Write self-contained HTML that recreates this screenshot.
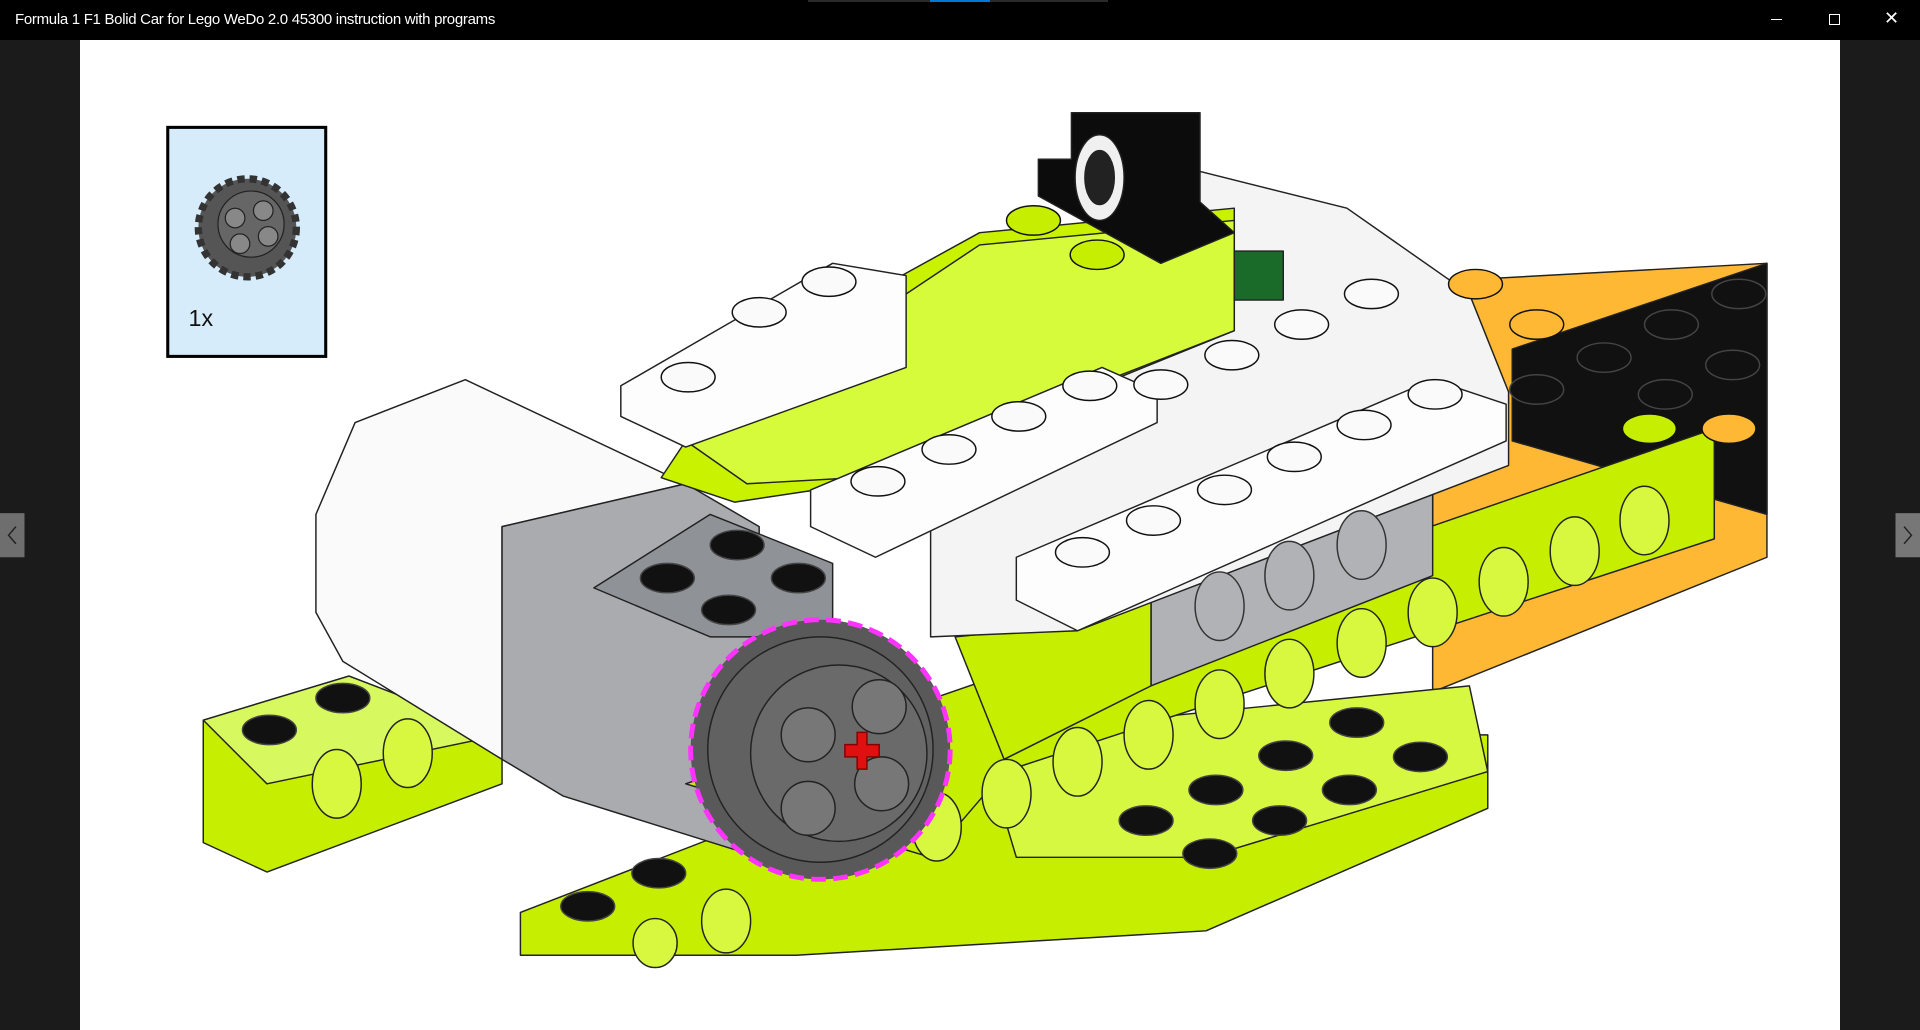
<!DOCTYPE html>
<html><head><meta charset="utf-8"><style>
html,body{margin:0;padding:0;width:1920px;height:1030px;overflow:hidden;background:#1b1b1b;font-family:"Liberation Sans",sans-serif}
#bar{position:absolute;left:0;top:0;width:1920px;height:40px;background:#000;color:#fff}
#title{position:absolute;left:15px;top:11px;font-size:15px;letter-spacing:-0.3px}
#page{position:absolute;left:80px;top:40px;width:1760px;height:990px;background:#fff}
svg{position:absolute;left:0;top:0}
</style></head><body>
<div id="bar"><div id="title">Formula 1 F1 Bolid Car for Lego WeDo 2.0 45300 instruction with programs</div>
<div style="position:absolute;left:808px;top:0;width:300px;height:2px;background:#2a2a2a"></div>
<div style="position:absolute;left:930px;top:0;width:60px;height:2px;background:#0078d7"></div>
<div style="position:absolute;left:1771px;top:19px;width:11px;height:1px;background:#fff"></div>
<div style="position:absolute;left:1829px;top:14px;width:9px;height:9px;border:1px solid #fff"></div>
<div style="position:absolute;left:1884px;top:8px;color:#fff;font-size:18px">✕</div>
</div>
<div id="page"></div>
<svg width="1920" height="1030" viewBox="0 0 1568 841" preserveAspectRatio="none">
<g stroke="#222" stroke-width="1.2" stroke-linejoin="round">
<polygon points="1170,230 1443,215 1443,455 1170,565" fill="#ffb833"/>
<polygon points="1235,285 1443,215 1443,420 1235,360" fill="#111"/>
<polygon points="166,588 285,552 410,600 410,640 218,712 166,688" fill="#c6ee00"/>
<polygon points="166,588 285,552 410,600 218,640" fill="#d8f860"/>
<polygon points="425,745 800,600 1215,600 1215,660 985,760 650,780 425,780" fill="#c6ee00"/>
<polygon points="800,600 1200,560 1215,630 985,700 830,700" fill="#d6f840"/>
<polygon points="258,420 290,345 380,310 560,395 410,430 410,620 280,540 258,500" fill="#fafafa"/>
<polygon points="410,430 560,395 620,430 620,700 460,650 410,620" fill="#a9abae"/>
<polygon points="485,480 580,420 680,460 680,520 580,520" fill="#8f9296"/>
<polygon points="560,640 1400,350 1400,440 820,630 760,700" fill="#c6ee00"/>
<polygon points="940,490 1170,385 1170,470 940,560" fill="#b0b2b5"/>
<polygon points="780,520 880,510 940,490 940,560 820,620" fill="#c6ee00"/>
<polygon points="760,430 980,140 1100,170 1200,240 1232,320 1232,380 880,515 760,520" fill="#f4f4f4"/>
<polygon points="540,390 600,300 800,190 1008,170 1008,270 700,395 600,410" fill="#c8f200"/>
<polygon points="560,360 800,200 1008,180 1008,270 700,390 610,395" fill="#d6fb3a"/>
<polygon points="507,315 680,215 740,225 740,300 560,365 507,340" fill="#fdfdfd"/>
<polygon points="662,400 900,300 945,320 945,345 715,455 662,430" fill="#fdfdfd"/>
<polygon points="830,455 1170,310 1230,330 1230,360 880,515 830,490" fill="#fdfdfd"/>
<polygon points="875,92 980,92 980,165 1008,190 948,215 848,160 848,130 875,130" fill="#0c0c0c"/>
<ellipse cx="898" cy="145" rx="20" ry="35" fill="#f0f0f0"/>
<ellipse cx="898" cy="145" rx="12" ry="22" fill="#222"/>
<rect x="1008" y="205" width="40" height="40" fill="#1a6b2a"/>
</g>
<g stroke="#111" stroke-width="1.2">
<g fill="#fafafa">
<ellipse cx="620" cy="255" rx="22" ry="12"/><ellipse cx="677" cy="230" rx="22" ry="12"/><ellipse cx="562" cy="308" rx="22" ry="12"/>
<ellipse cx="717" cy="393" rx="22" ry="12"/><ellipse cx="775" cy="367" rx="22" ry="12"/><ellipse cx="832" cy="340" rx="22" ry="12"/><ellipse cx="890" cy="315" rx="22" ry="12"/>
<ellipse cx="884" cy="451" rx="22" ry="12"/><ellipse cx="942" cy="425" rx="22" ry="12"/><ellipse cx="1000" cy="400" rx="22" ry="12"/><ellipse cx="1057" cy="373" rx="22" ry="12"/><ellipse cx="1114" cy="347" rx="22" ry="12"/><ellipse cx="1172" cy="322" rx="22" ry="12"/>
<ellipse cx="1006" cy="290" rx="22" ry="12"/><ellipse cx="1063" cy="265" rx="22" ry="12"/><ellipse cx="1120" cy="240" rx="22" ry="12"/><ellipse cx="948" cy="314" rx="22" ry="12"/>
</g>
<g fill="#c6ee00"><ellipse cx="844" cy="180" rx="22" ry="12"/><ellipse cx="896" cy="208" rx="22" ry="12"/><ellipse cx="1347" cy="350" rx="22" ry="12"/></g>
<g fill="#ffb833"><ellipse cx="1205" cy="232" rx="22" ry="12"/><ellipse cx="1255" cy="265" rx="22" ry="12"/><ellipse cx="1412" cy="350" rx="22" ry="12"/></g>
<g fill="#111" stroke="#444">
<ellipse cx="1420" cy="240" rx="22" ry="12"/><ellipse cx="1365" cy="265" rx="22" ry="12"/><ellipse cx="1310" cy="292" rx="22" ry="12"/><ellipse cx="1415" cy="298" rx="22" ry="12"/><ellipse cx="1360" cy="322" rx="22" ry="12"/><ellipse cx="1255" cy="318" rx="22" ry="12"/>
<ellipse cx="545" cy="472" rx="22" ry="12"/><ellipse cx="602" cy="445" rx="22" ry="12"/><ellipse cx="595" cy="498" rx="22" ry="12"/><ellipse cx="652" cy="472" rx="22" ry="12"/>
<ellipse cx="220" cy="596" rx="22" ry="12"/><ellipse cx="280" cy="570" rx="22" ry="12"/><ellipse cx="480" cy="740" rx="22" ry="12"/><ellipse cx="538" cy="713" rx="22" ry="12"/>
<ellipse cx="936" cy="670" rx="22" ry="12"/><ellipse cx="993" cy="645" rx="22" ry="12"/><ellipse cx="1050" cy="617" rx="22" ry="12"/><ellipse cx="1108" cy="590" rx="22" ry="12"/>
<ellipse cx="988" cy="697" rx="22" ry="12"/><ellipse cx="1045" cy="670" rx="22" ry="12"/><ellipse cx="1102" cy="645" rx="22" ry="12"/><ellipse cx="1160" cy="618" rx="22" ry="12"/>
</g>
<g fill="#d8f840" stroke="#222">
<ellipse cx="880" cy="622" rx="20" ry="28"/><ellipse cx="938" cy="600" rx="20" ry="28"/><ellipse cx="996" cy="575" rx="20" ry="28"/><ellipse cx="1053" cy="550" rx="20" ry="28"/><ellipse cx="1112" cy="525" rx="20" ry="28"/><ellipse cx="1170" cy="500" rx="20" ry="28"/><ellipse cx="1228" cy="475" rx="20" ry="28"/><ellipse cx="1286" cy="450" rx="20" ry="28"/><ellipse cx="1343" cy="425" rx="20" ry="28"/>
<ellipse cx="822" cy="648" rx="20" ry="28"/><ellipse cx="765" cy="675" rx="20" ry="28"/>
<ellipse cx="275" cy="640" rx="20" ry="28"/><ellipse cx="333" cy="615" rx="20" ry="28"/><ellipse cx="535" cy="770" rx="18" ry="20"/><ellipse cx="593" cy="752" rx="20" ry="26"/>
</g>
<g fill="#b0b2b5" stroke="#333"><ellipse cx="996" cy="495" rx="20" ry="28"/><ellipse cx="1053" cy="470" rx="20" ry="28"/><ellipse cx="1112" cy="445" rx="20" ry="28"/></g>
<circle cx="670" cy="612" r="106" fill="#595959" stroke="#ff33ff" stroke-width="4" stroke-dasharray="12 6"/>
<circle cx="670" cy="612" r="92" fill="#616161" stroke="#222"/>
<circle cx="685" cy="615" r="72" fill="#6a6a6a" stroke="#222"/>
<circle cx="660" cy="600" r="22" fill="#777" stroke="#222"/><circle cx="718" cy="577" r="22" fill="#777" stroke="#222"/>
<circle cx="660" cy="660" r="22" fill="#777" stroke="#222"/><circle cx="720" cy="640" r="22" fill="#777" stroke="#222"/>
<path d="M690 608h10v-10h8v10h10v10h-10v10h-8v-10h-10z" fill="#e01010" stroke="#800"/>
</g>
<rect x="137" y="104" width="129" height="187" fill="#d7ecfb" stroke="#000" stroke-width="2.5"/>
<circle cx="202" cy="186" r="40" fill="#555" stroke="#333" stroke-dasharray="6 4" stroke-width="6"/>
<circle cx="205" cy="183" r="27" fill="#666" stroke="#222"/>
<circle cx="192" cy="178" r="8" fill="#888" stroke="#222"/><circle cx="215" cy="172" r="8" fill="#888" stroke="#222"/><circle cx="196" cy="199" r="8" fill="#888" stroke="#222"/><circle cx="219" cy="193" r="8" fill="#888" stroke="#222"/>
<text x="154" y="266" font-family="Liberation Sans" font-size="19" fill="#111">1x</text>
<rect x="0" y="419" width="20" height="36" fill="#6e6e6e"/>
<path d="M13 430l-6 7 6 7" stroke="#222" fill="none" stroke-width="1.2"/>
<rect x="1548" y="419" width="20" height="36" fill="#777"/>
<path d="M1555 430l6 7-6 7" stroke="#222" fill="none" stroke-width="1.2"/>
</svg>
</body></html>
